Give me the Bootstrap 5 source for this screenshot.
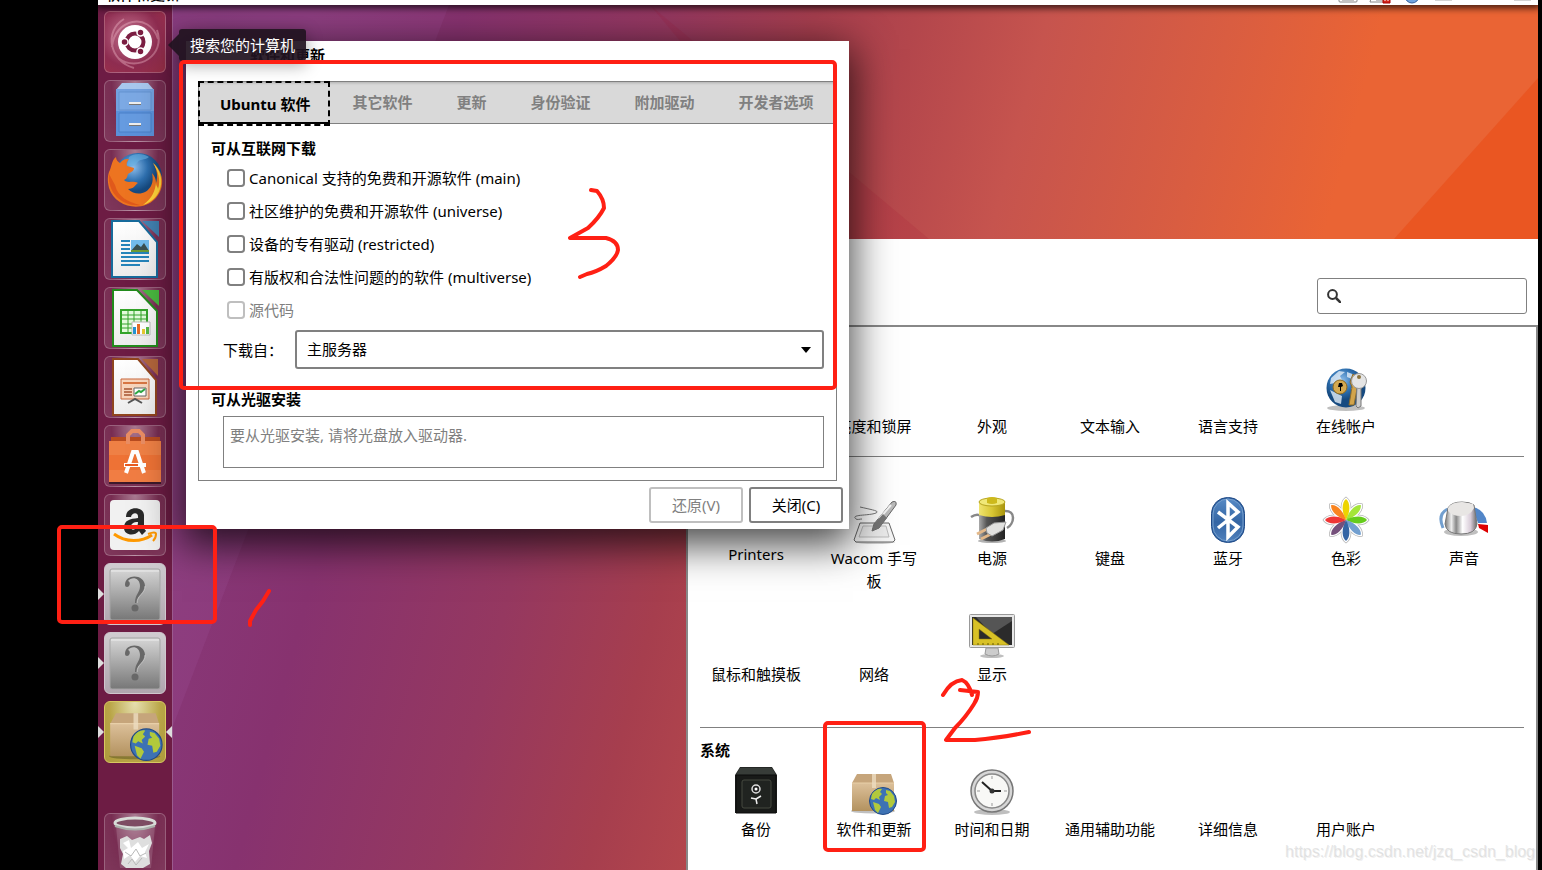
<!DOCTYPE html>
<html lang="zh-CN">
<head>
<meta charset="utf-8">
<meta name="viewport" content="width=device-width, initial-scale=1">
<title>软件和更新</title>
<link href="https://cdn.jsdelivr.net/npm/bootstrap@5.3.0/dist/css/bootstrap.min.css" rel="stylesheet">
<style>
  body { background: #000; color: #000; font: 15px/22px "Noto Sans", "Noto Sans CJK SC", sans-serif; }
  .screen { margin: 0 4px 0 98px; }
  .panel { height: 5px; background: #fff; z-index: 3; box-shadow: 0 1px 7px 2px rgba(0,0,0,.75); font-weight: 500; }
  .panel-title { line-height: 22px; padding-left: 7px; }
  .desktop { background: linear-gradient(105deg, #7d3474 0%, #88397a 12%, #87326f 22%, #953860 34%, #a63e4e 43%, #b3464c 49%, #c6544e 57%, #d95d41 68%, #ea6434 77%, #ea6434 100%); }
  .facets { inset: 0; }
  .launcher { width: 75px; gap: 7px; padding: 6px 6px 0; background: #6d1c44; border-right: 1px solid #9a5b8e; z-index: 1; }
  .launcher-tile { width: 62px; height: 62px; padding: 0; border: 1px solid rgba(255,255,255,.22); border-radius: 6px; background: radial-gradient(ellipse at 50% 0, rgba(255,255,255,.42), rgba(255,255,255,.08) 55%, rgba(255,255,255,.13)); }
  .launcher-tile svg { display: block; margin: -1px; width: 62px; height: 62px; overflow: visible; }
  .tile-home { background: radial-gradient(circle at 40% 40%, #c0708d, #8e2c50 60%, #9d3048); }
  .tile-unknown { background: linear-gradient(#d0ccd0, #b0a5ae); border-color: #d0c6ce; }
  .tile-package { background: radial-gradient(ellipse at 50% 0, #e6dfb0, #b9a547 60%, #ac9a3c); border-color: #d8c860; }
  .tile-trash { margin-top: 43px; }
  .run::before, .run-focus::after { content: ""; position: absolute; top: 24px; border: 6px solid transparent; }
  .run::before { left: -7px; border-left-color: #ddd; border-right: 0; }
  .run-focus::after { right: -7px; border-right-color: #ddd; border-left: 0; }
  .hint { left: 81px; top: 24px; height: 32px; padding: 6px 11px 0; border-radius: 3px; background: rgba(33,19,32,.93); color: #fff; z-index: 4; box-shadow: 0 4px 16px rgba(0,0,0,.35); line-height: 20px; }
  .hint::before { content: ""; position: absolute; left: -11px; top: 5px; border: 11px solid transparent; border-right-color: rgba(33,19,32,.93); border-left: 0; }
  .win { background: #fff; }
  .win-sources { left: 88px; top: 36px; width: 663px; z-index: 2; box-shadow: 0 12px 38px 4px rgba(0,0,0,.72); }
  .win-sources header { height: 40px; padding: 3px 0 0 64px; font-weight: 700; }
  .notebook { margin: 0 12px; border: 1px solid #808080; }
  .tabs { height: 42px; background: #d9d9d9; border-bottom: 1px solid #808080; box-shadow: inset 0 3px 3px -2px rgba(0,0,0,.2); }
  .tabs button { border: 0; background: none; padding: 0 22px; color: #808080; font-weight: 700; white-space: nowrap; line-height: 39px; }
  .tabs .current { color: #000; margin: -1px 0 -3px -1px; border: 2px dashed #000; padding: 0 18px 0 20px; box-shadow: inset 0 -2px #000; line-height: 36px; }
  .page { padding: 13px 12px 12px; }
  .caption { font-size: 15px; line-height: 22px; font-weight: 700; margin: 0; }
  .choices { margin-top: 2px; }
  .choice { height: 33px; gap: 4px; padding-left: 16px; }
  .choice input { margin: 0; width: 18px; height: 18px; border: 2px solid #808080; border-radius: 3px; }
  .choice .form-check-input:disabled ~ label { color: #808080; opacity: 1; }
  .server { margin: 4px 0 19px 12px; }
  .server label { width: 72px; }
  .server select { height: 39px; border: 2px solid #808080; border-radius: 3px; color: #000; font-size: 15px; padding: 0 10px; background: #fff url("data:image/svg+xml,%3Csvg xmlns='http://www.w3.org/2000/svg' width='10' height='6'%3E%3Cpath d='M0 0h10L5 6z'/%3E%3C/svg%3E") no-repeat right 11px center / 10px 6px; }
  .media { margin: 6px 0 0 12px; height: 52px; border: 1px solid #808080; padding: 7px 6px; color: #808080; }
  .actions { gap: 6px; padding: 6px; }
  .actions button { width: 94px; height: 36px; background: #fff; border: 2px solid #808080; border-radius: 3px; color: #000; padding: 0; }
  .actions button:disabled { color: #808080; border-color: #bfbfbf; }
  .win-settings { left: 588px; right: 0; top: 234px; bottom: 0; }
  .win-settings header { height: 86px; padding: 28px 11px 0 0; }
  .search { width: 210px; height: 36px; border: 1px solid #808080; border-radius: 3px; padding: 0 9px; gap: 6px; margin-top: 11px; }
  .search input { border: 0; outline: 0; background: none; min-width: 0; }
  .settings-body { border: 2px solid #888; border-bottom: 0; padding: 0 12px; }
  .grid7 { display: grid; grid-template-columns: repeat(7, 1fr); row-gap: 19px; margin-left: -3px; margin-right: 1px; }
  .grid-personal { padding: 37px 0 18px; }
  .grid-hardware { padding: 39px 0 41px; }
  .grid-system { padding-top: 6px; }
  .skip-one { grid-column: 2; }
  .entry { color: #000; text-decoration: none; text-align: center; padding: 0 12px; line-height: 23px; }
  .entry svg, .blank-icon { display: block; width: 48px; height: 48px; margin: 0 auto 3px; overflow: visible; }
  .entry-latin { line-height: 15px; }
  .rule { border-top: 1px solid #808080; }
  .system-title { padding-top: 11px; }
  .annotations { inset: 0; z-index: 9; pointer-events: none; }
  .watermark { right: 7px; bottom: 7px; z-index: 8; font: 16px/22px "Liberation Sans", sans-serif; color: rgba(205,205,205,.5); text-shadow: 1px 1px 0 rgba(150,150,150,.15); }
</style>
</head>
<body class="vh-100 overflow-hidden position-relative">

<svg width="0" height="0" class="position-absolute" aria-hidden="true">
  <defs>
    <linearGradient id="gBox" x2="0" y2="1"><stop stop-color="#dcc09a"/><stop offset="1" stop-color="#b3925f"/></linearGradient>
    <linearGradient id="gGrey" x2="0" y2="1"><stop stop-color="#d6d6d6"/><stop offset="1" stop-color="#777"/></linearGradient>
    <linearGradient id="gPaper" x2="0" y2="1"><stop stop-color="#fff"/><stop offset="1" stop-color="#ececec"/></linearGradient>
    <linearGradient id="gMetal"><stop stop-color="#777"/><stop offset=".2" stop-color="#eee"/><stop offset=".35" stop-color="#888"/><stop offset=".55" stop-color="#fff"/><stop offset=".8" stop-color="#d8ccd8"/><stop offset="1" stop-color="#666"/></linearGradient>
    <linearGradient id="gBlue" x2="0" y2="1"><stop stop-color="#5f92cc"/><stop offset=".55" stop-color="#3465a4"/><stop offset="1" stop-color="#5585c0"/></linearGradient>
    <linearGradient id="gDark"><stop stop-color="#aaa"/><stop offset=".3" stop-color="#555"/><stop offset="1" stop-color="#222"/></linearGradient>
    <linearGradient id="gYellow"><stop stop-color="#f0e470"/><stop offset=".5" stop-color="#d8c634"/><stop offset="1" stop-color="#a8940c"/></linearGradient>
    <radialGradient id="gGlobe" cx=".4" cy=".3"><stop stop-color="#8dbdea"/><stop offset=".6" stop-color="#2e70b0"/><stop offset="1" stop-color="#164a80"/></radialGradient>
    <symbol id="package" viewBox="0 0 48 48">
      <ellipse cx="22" cy="44" rx="22" ry="2.500" fill="#000" opacity=".25"/>
      <path d="M6 7h34l3 9H1z" fill="#c6a57b"/><path d="M1 16h42v28H1z" fill="url(#gBox)"/>
      <path d="M1 16h42" stroke="#e8cfa8"/><path d="M21 7h4v14h-4z" fill="#ecdcc0" opacity=".8"/>
      <circle cx="32" cy="34" r="13.500" fill="#3d72b4" stroke="#204a87"/>
      <path d="M21 27c3-4 7-6 10-5l-2 3 2 2-3 3 1 3-4-2-2 2-3-1zM22 35l6 2 2 3-3 6-3-3zM35 23l4 1 4 5 1 6-3 5-3 1-1-6-4-1 1-5 3-1-2-2z" fill="#b2c93b"/>
    </symbol>
    <symbol id="unknown" viewBox="0 0 62 62">
      <rect x="6" y="6" width="50" height="51" rx="2" fill="url(#gGrey)" stroke="#a5a5a5"/><path d="M7 8h48" stroke="#eee"/>
      <path d="M21 22c0-12 20-11 20 1 0 8-8 9-8 17h-2c0-9 5-10 5-17 0-8-8-10-12-5 3 1 2 6-1 6q-2 0-2-2z" fill="#686868"/><path d="M41 23c0 8-8 9-8 17" fill="none" stroke="#ddd" stroke-width=".7"/><circle cx="31" cy="45" r="3.500" fill="#686868"/>
    </symbol>
  </defs>
</svg>

<div class="screen h-100 d-flex flex-column position-relative overflow-hidden">
  <div class="panel position-relative flex-shrink-0">
    <div class="d-flex justify-content-between align-items-end h-100 overflow-hidden">
      <span class="panel-title">软件和更新</span>
      <svg width="200" height="5" viewBox="0 0 200 5" aria-hidden="true">
        <path d="M1-8v9q0 1 1 1h16q1 0 1-1v-9M4 0h12" fill="none" stroke="#888"/>
        <path d="M34-5l-2 7h17M38 0h8" fill="none" stroke="#888"/><path d="M45-8h7v11h-7z" fill="#d3281c" stroke="#a00"/><path d="M47 1V-1h3v2" stroke="#fff" fill="none"/>
        <circle cx="74" cy="-4" r="7" fill="#6fa4df" stroke="#345f9c"/>
        <path d="M97 0h17M176 0h17" stroke="#aaa"/>
      </svg>
    </div>
  </div>

  <main class="desktop position-relative flex-grow-1 d-flex">
    <svg class="facets position-absolute w-100 h-100" aria-hidden="true">
      <path d="M0 0h351L20 865H0z" fill="#a560a8" opacity=".16"/>
      <path d="M552 0l279 234v100z" fill="#a01030" opacity=".13"/>
      <path d="M1440 73V865H940L1296 234z" fill="#ea4c18" opacity=".6"/>
    </svg>

    <nav class="launcher d-flex flex-column position-relative flex-shrink-0" aria-label="启动器">
      <button class="launcher-tile tile-home" aria-label="搜索您的计算机"><svg viewBox="0 0 62 62">
        <path d="M8 36C10 8 45 0 54 28M53 19C62 44 34 62 14 47M20 8C0 20 5 50 30 57" fill="none" stroke="#f0b8c8" stroke-width="2" opacity=".4"/>
        <circle cx="31" cy="31" r="17" fill="#fff"/><circle cx="31" cy="31" r="8.500" fill="none" stroke="#7b1e42" stroke-width="4"/>
        <g fill="#7b1e42" stroke="#fff" stroke-width="1.500"><circle cx="20.500" cy="31" r="3.500"/><circle cx="36.500" cy="21.500" r="3.500"/><circle cx="36.500" cy="40.500" r="3.500"/></g></svg></button>
      <button class="launcher-tile" aria-label="文件"><svg viewBox="0 0 62 62">
        <path d="M18 3h26l6 7H12z" fill="#a8c8ee"/><path d="M12 9h38v47H12z" fill="#5b91da"/><path d="M15 12h32v18H15zM15 33h32v19H15z" fill="#669be0" stroke="#4b80c9"/>
        <path d="M12 9h38v22H12z" fill="#fff" opacity=".15"/><path d="M26 22v2h10v-2M26 43v2h10v-2" fill="none" stroke="#777" stroke-width="2"/><path d="M26 22v1h10v-1M26 43v1h10v-1" fill="none" stroke="#eee" stroke-width="2"/></svg></button>
      <button class="launcher-tile" aria-label="Firefox"><svg viewBox="0 0 62 62">
        <circle cx="34" cy="28" r="24" fill="url(#gGlobe)"/><path d="M25 8c5-4 14-4 20 0-5 4-9 1-12 6-2 4-7 3-10 2z" fill="#69b4e4" opacity=".6"/>
        <path d="M5 23C8 18 7 12 12 8c0 3 2 5 4 6 3-4 6-4 9-4-2 2-3 5-2 7l7 2c0 3-3 4-6 6-1 3-1 5-4 6 4 4 8 0 14 3-3 2-4 6-10 6 7 7 18 6 23-3 2-4 2-8 1-13 3 3 4 7 4 10 2-7 1-14-3-20 13 11 11 27 2 36C37 64 11 58 5 39c-1-5-2-10 0-16z" fill="#ed7420"/>
        <path d="M49 14c14 13 10 36-10 42 10-7 12-15 13-22 0 3 2 4 2 6 3-9 0-18-5-26z" fill="#ffd43a"/><path d="M5 25c-2 21 16 33 31 31C24 53 14 48 11 36z" fill="#d84c18" opacity=".65"/></svg></button>
      <button class="launcher-tile" aria-label="LibreOffice Writer"><svg viewBox="0 0 62 62">
        <path d="M8 3h27l18 21v35H8z" fill="url(#gPaper)" stroke="#176b9c" stroke-width="2"/><path d="M38 3h17v16z" fill="#368cbd" opacity=".85"/>
        <g stroke="#2584ba" stroke-width="2"><path d="M17 23h9M17 27h9M17 31h9M17 35h28M17 39h28M17 43h28M17 47h19"/></g><path d="M27 22h18v12H27z" fill="#73bcec"/><path d="M27 33l6-7 4 3 3-4 5 8z" fill="#3b5050"/><path d="M27 32h18v2H27z" fill="#6c9b35"/></svg></button>
      <button class="launcher-tile" aria-label="LibreOffice Calc"><svg viewBox="0 0 62 62">
        <path d="M9 3h24l20 21v35H9z" fill="url(#gPaper)" stroke="#228b1c" stroke-width="2"/><path d="M38 3h17v16z" fill="#49b83f"/>
        <path d="M17 23h26v23H17z" fill="#e4fbdc" stroke="#34a42a" stroke-width="2"/><path d="M17 28h26M17 32h26M17 37h26M17 41h26M24 23v23M30 23v23M37 23v23" stroke="#34a42a"/><path d="M28 35h18v13H28z" fill="#fff" stroke="#bbb"/><path d="M29 40h3v7h-3z" fill="#2693d2"/><path d="M33 37h3v10h-3z" fill="#e56b27"/><path d="M38 42h3v5h-3z" fill="#e6c92f"/><path d="M42 40h3v7h-3z" fill="#54b948"/></svg></button>
      <button class="launcher-tile" aria-label="LibreOffice Impress"><svg viewBox="0 0 62 62">
        <path d="M9 3h25l18 21v35H9z" fill="url(#gPaper)" stroke="#90451e" stroke-width="2"/><path d="M38 3h16v17z" fill="#b2653b"/>
        <path d="M17 23h28v20H17z" fill="#f8d5bc" stroke="#c8663a"/><path d="M19 27h24" stroke="#d87643" stroke-width="2"/><path d="M20 33h8M20 36h8M20 39h8" stroke="#a75431" stroke-width="1.500"/><path d="M30 32h12v8H30z" fill="#fff" stroke="#666"/><path d="M31 38l4-3 2 1 4-3" fill="none" stroke="#2da944" stroke-width="2"/><path d="M24 47l7-4 7 4" fill="none" stroke="#555" stroke-width="2"/></svg></button>
      <button class="launcher-tile" aria-label="Ubuntu 软件中心"><svg viewBox="0 0 62 62">
        <path d="M5 58h52" stroke="#000" opacity=".5" stroke-width="2"/><path d="M7 12h49v10H7z" fill="#b84c20"/><path d="M5 16h52v41H5z" fill="#ee7235"/><path d="M5 16h52v14H5z" fill="#f08a50" opacity=".6"/><path d="M5 45h52v12H5z" fill="#f3854d" opacity=".6"/>
        <path d="M24 19V10l4-4h7l4 4v9" fill="none" stroke="#e98d63" stroke-width="4"/><path d="M22 48l7-21h4l7 21M20 40h22" fill="none" stroke="#fff" stroke-width="4"/><path d="M21 40h13" stroke="#e85b21" stroke-width="2"/></svg></button>
      <button class="launcher-tile" aria-label="Amazon"><svg viewBox="0 0 62 62">
        <rect x="6" y="6" width="50" height="50" rx="4" fill="#f1f1f1"/><path d="M22 23c0-12 19-11 18-1v10c0 4 2 4 2 5l-4 4-3-4c-5 6-15 4-15-3 0-8 6-9 14-10 1-6-6-6-7-1zM34 28c-5 0-7 2-7 5 0 5 7 3 7-5z" fill="#292929" fill-rule="evenodd"/><path d="M10 40c12 9 28 8 38 1" fill="none" stroke="#f90" stroke-width="3"/><path d="M44 40c5-2 8-2 8 0 0 3-1 5-3 7" fill="none" stroke="#f90" stroke-width="2"/></svg></button>
      <button class="launcher-tile tile-unknown run position-relative" aria-label="未知应用程序"><svg viewBox="0 0 62 62"><use href="#unknown" width="62" height="62"/></svg></button>
      <button class="launcher-tile tile-unknown run position-relative" aria-label="未知应用程序"><svg viewBox="0 0 62 62"><use href="#unknown" width="62" height="62"/></svg></button>
      <button class="launcher-tile tile-package run run-focus position-relative" aria-label="软件和更新"><svg viewBox="0 0 62 62"><use href="#package" x="5" y="4" width="56" height="56"/></svg></button>
      <button class="launcher-tile tile-trash flex-shrink-0" aria-label="回收站"><svg viewBox="0 0 62 62">
        <path d="M12 13l4 42h31l4-42z" fill="#fff" opacity=".14"/><ellipse cx="31" cy="10" rx="20" ry="5" fill="#7d4c62" stroke="#d8dcd8" stroke-width="3"/><path d="M11 13q20 7 40 0" fill="none" stroke="#aab0aa" stroke-width="2"/>
        <path d="M16 26l7-3 5 4 8-3 4 2 6-4 2 8-3 8 1 13-7 4H22l-5-4 2-10-3-6z" fill="#dedede"/><path d="M19 30l6-3 2 8 7-6 4 6 7-4-4 8 2 6-7-2-5 6-5-7-6 4-1-8 5-3z" fill="#fff"/><path d="M21 39l6 4 5-7 4 7 6-3M24 51l4-5 4 6 6-7" fill="none" stroke="#b8b8b8"/></svg></button>
    </nav>

    <div class="hint position-absolute" role="tooltip">搜索您的计算机</div>

    <section class="win win-settings position-absolute d-flex flex-column" aria-label="系统设置">
      <header class="d-flex align-items-start justify-content-end">
        <div class="search d-flex align-items-center">
          <svg width="14" height="14" viewBox="0 0 14 14" class="flex-shrink-0" aria-hidden="true"><circle cx="5.500" cy="5.500" r="4.400" fill="none" stroke="#333" stroke-width="2"/><path d="M9 9l5 5" stroke="#333" stroke-width="2.500"/></svg>
          <input type="search" class="w-100" aria-label="搜索">
        </div>
      </header>
      <div class="settings-body flex-grow-1 overflow-hidden">
        <div class="grid7 grid-personal">
          <a class="entry skip-one" href="#"><span class="blank-icon"></span>亮度和锁屏</a>
          <a class="entry" href="#"><span class="blank-icon"></span>外观</a>
          <a class="entry" href="#"><span class="blank-icon"></span>文本输入</a>
          <a class="entry" href="#"><span class="blank-icon"></span>语言支持</a>
          <a class="entry" href="#"><svg viewBox="0 0 48 48"><ellipse cx="24" cy="44" rx="19" ry="3" fill="#000" opacity=".25"/><circle cx="24" cy="24" r="19.500" fill="url(#gGlobe)"/><path d="M9 14l8-7 6 1-5 4 2 4-7 3-5 1zM8 26l12 6-1 8-6-2zM25 8l8 3-3 4-5-2zM29 24l6 2-3 12-3-4z" fill="#e3eef8" opacity=".8"/><circle cx="18" cy="23" r="7" fill="#d4a950" stroke="#8c681c"/><path d="M17 19h3l1 3-2 1v4h-1v-4h-2z"/><path d="M31 10l5 4-2 9 1 2-3 16h-5l3-18-2-5z" fill="#d2a44b" stroke="#8a6a2c"/><path d="M35 22h4v20l-3 2-2-2z" fill="#ccc" stroke="#777"/><circle cx="37" cy="17" r="7.500" fill="#e4e4e4" stroke="#999"/><circle cx="37" cy="13" r="2" fill="#8a723b"/></svg>在线帐户</a>
        </div>
        <div class="rule"></div>
        <div class="grid7 grid-hardware">
          <a class="entry entry-latin" href="#"><span class="blank-icon"></span>Printers</a>
          <a class="entry" href="#"><svg viewBox="0 0 48 48"><ellipse cx="25" cy="46" rx="20" ry="2" opacity=".2"/><path d="M10 27h29l6 17-2 2H6l-2-2z" fill="#f5f5f5" stroke="#666"/><path d="M13 30h23l3 11H9z" fill="#ececec" stroke="#bbb"/><path d="M10 11c13 3 20 4 16 6-7 3-26 1-20 6 1 1 4 0 6 0" fill="none" stroke="#777"/><path d="M42 6q5-2 4 3L29 32l-7 3 2-7z" fill="#bbb" stroke="#666"/><path d="M41 9L29 23" stroke="#f5f5f5" stroke-width="2"/><path d="M33 18l4 4-8 10-7 3 2-7z" fill="#777"/></svg>Wacom 手写板</a>
          <a class="entry" href="#"><svg viewBox="0 0 48 48"><ellipse cx="24" cy="45" rx="14" ry="2" opacity=".3"/><path d="M36 15c13-1 10 13 3 17M3 21q6-4 10-1" fill="none" stroke="#888" stroke-width="2.500"/><path d="M11 17h26v26q-13 5-26 0z" fill="url(#gDark)"/><path d="M11 5q13-5 26 0v14q-13 4-26 0z" fill="url(#gYellow)"/><ellipse cx="24" cy="6" rx="13" ry="4" fill="#f0e878" stroke="#b6a420"/><path d="M19 2q5-2 10 0v5q-5 2-10 0z" fill="#cdb91c"/><path d="M9 38l10-5M13 43l10-5" stroke="#e3b889" stroke-width="3"/><path d="M18 32l8-5 12-1-3 8-11 6-5-3z" fill="#e1e1df" stroke="#999"/></svg>电源</a>
          <a class="entry" href="#"><span class="blank-icon"></span>键盘</a>
          <a class="entry" href="#"><svg viewBox="0 0 48 48"><rect x="7.500" y="1.500" width="33" height="45" rx="16" fill="#3569a8" stroke="#204a87"/><rect x="9" y="3" width="30" height="42" rx="15" fill="url(#gBlue)" stroke="#89aed7" opacity=".8"/><path d="M14 16l20 15-10 10V7l10 9-20 16" fill="none" stroke="#fff" stroke-width="3.500"/></svg>蓝牙</a>
          <a class="entry" href="#"><svg viewBox="0 0 48 48"><defs><path id="petal" d="M24 24C19 15 20 6 24 3c4 3 5 12 0 21z"/></defs>
            <g fill="#fff" stroke="#b5b5b5" stroke-width="4"><use href="#petal"/><use href="#petal" transform="rotate(45 24 24)"/><use href="#petal" transform="rotate(90 24 24)"/><use href="#petal" transform="rotate(135 24 24)"/><use href="#petal" transform="rotate(180 24 24)"/><use href="#petal" transform="rotate(225 24 24)"/><use href="#petal" transform="rotate(270 24 24)"/><use href="#petal" transform="rotate(315 24 24)"/></g>
            <g stroke="#fff" stroke-width="2.500"><use href="#petal"/><use href="#petal" transform="rotate(45 24 24)"/><use href="#petal" transform="rotate(90 24 24)"/><use href="#petal" transform="rotate(135 24 24)"/><use href="#petal" transform="rotate(180 24 24)"/><use href="#petal" transform="rotate(225 24 24)"/><use href="#petal" transform="rotate(270 24 24)"/><use href="#petal" transform="rotate(315 24 24)"/></g>
            <use href="#petal" fill="#edd400"/><use href="#petal" fill="#a4e63a" transform="rotate(45 24 24)"/><use href="#petal" fill="#66cc1c" transform="rotate(90 24 24)"/><use href="#petal" fill="#729fcf" transform="rotate(135 24 24)"/><use href="#petal" fill="#3465a4" transform="rotate(180 24 24)"/><use href="#petal" fill="#75507b" transform="rotate(225 24 24)"/><use href="#petal" fill="#ef3535" transform="rotate(270 24 24)"/><use href="#petal" fill="#f98420" transform="rotate(315 24 24)"/></svg>色彩</a>
          <a class="entry" href="#"><svg viewBox="0 0 48 48"><ellipse cx="21" cy="36" rx="17" ry="4" opacity=".25"/><path d="M3 32Q-3 18 8 13" fill="none" stroke="#729fcf" stroke-width="3"/><path d="M32 11q13 2 15 16h-9z" fill="#5286c8"/><path d="M38 28l10 1v8l-9-5z" fill="#d00"/><path d="M8 12q3-6 14-6 8 0 12 3l3 19q-1 10-16 10T5 28z" fill="url(#gMetal)" stroke="#777"/><path d="M8 12q3-6 14-6l11 2 1 4q-4 8-13 8T8 15z" fill="#e8e6e4"/></svg>声音</a>
          <a class="entry" href="#"><span class="blank-icon"></span>鼠标和触摸板</a>
          <a class="entry" href="#"><span class="blank-icon"></span>网络</a>
          <a class="entry" href="#"><svg viewBox="0 0 48 48"><ellipse cx="24" cy="44" rx="12" ry="2" opacity=".25"/><path d="M18 36h12l1 6q-7 4-14 0z" fill="#ccc" stroke="#999"/><rect x="1.500" y="2.500" width="45" height="33" rx="1" fill="#e8e8e8" stroke="#999"/><path d="M4 5h40v28H4z" fill="#2b2b2b"/><path d="M8 5h36v4L24 22z" fill="#555"/><path d="M5 6l36 27H5zM11 17v10h13z" fill="#d8c126" stroke="#8e7a0b" stroke-width=".5" fill-rule="evenodd"/><path d="M10 33v-2M15 33v-2M20 33v-2M25 33v-2M30 33v-2" stroke="#6b5c00"/></svg>显示</a>
        </div>
        <div class="rule"></div>
        <h2 class="caption system-title">系统</h2>
        <div class="grid7 grid-system">
          <a class="entry" href="#"><svg viewBox="0 0 48 48"><path d="M8 0h32l5 8v38H3V8z" fill="#252725"/><path d="M8 1h32l4 7H4z" fill="#373c38"/><path d="M4 8h40v38H4z" fill="#181a18" stroke="#0a0a0a"/><rect x="10" y="13" width="29" height="28" rx="2" fill="#202320" stroke="#45483f"/><circle cx="24" cy="22" r="4" fill="#222" stroke="#ddd" stroke-width="1.500"/><circle cx="24" cy="22" r="1.500" fill="#fff"/><path d="M24 32l5-3M24 32l-5-1M24 32l1 5" stroke="#eee" stroke-width="1.500"/></svg>备份</a>
          <a class="entry" href="#"><svg viewBox="0 0 48 48"><use href="#package" x="1" y="0" width="48" height="48"/></svg>软件和更新</a>
          <a class="entry" href="#"><svg viewBox="0 0 48 48"><ellipse cx="24" cy="45" rx="18" ry="3" opacity=".25"/><circle cx="24" cy="24" r="21" fill="#d6d6d6" stroke="#777" stroke-width="1.500"/><circle cx="24" cy="24" r="17" fill="#f8f8f6" stroke="#888" stroke-width="1.500"/><path d="M24 9v3M24 36v3M9 24h3M36 24h3" stroke="#999"/><path d="M14 15l10 9h9" fill="none" stroke="#222" stroke-width="2"/><circle cx="24" cy="24" r="2.500" fill="#333"/></svg>时间和日期</a>
          <a class="entry" href="#"><span class="blank-icon"></span>通用辅助功能</a>
          <a class="entry" href="#"><span class="blank-icon"></span>详细信息</a>
          <a class="entry" href="#"><span class="blank-icon"></span>用户账户</a>
        </div>
      </div>
    </section>

    <section class="win win-sources position-absolute" aria-label="软件和更新">
      <header>软件和更新</header>
      <div class="notebook">
        <div class="tabs d-flex" role="tablist">
          <button role="tab" class="current" aria-selected="true">Ubuntu 软件</button>
          <button role="tab">其它软件</button>
          <button role="tab">更新</button>
          <button role="tab">身份验证</button>
          <button role="tab">附加驱动</button>
          <button role="tab">开发者选项</button>
        </div>
        <div class="page">
          <h2 class="caption">可从互联网下载</h2>
          <div class="choices">
            <div class="choice d-flex align-items-center"><input class="form-check-input" type="checkbox" id="c1"><label for="c1">Canonical 支持的免费和开源软件 (main)</label></div>
            <div class="choice d-flex align-items-center"><input class="form-check-input" type="checkbox" id="c2"><label for="c2">社区维护的免费和开源软件 (universe)</label></div>
            <div class="choice d-flex align-items-center"><input class="form-check-input" type="checkbox" id="c3"><label for="c3">设备的专有驱动 (restricted)</label></div>
            <div class="choice d-flex align-items-center"><input class="form-check-input" type="checkbox" id="c4"><label for="c4">有版权和合法性问题的的软件 (multiverse)</label></div>
            <div class="choice d-flex align-items-center"><input class="form-check-input" type="checkbox" id="c5" disabled><label for="c5">源代码</label></div>
          </div>
          <div class="server d-flex align-items-center">
            <label for="server" class="flex-shrink-0">下载自：</label>
            <select id="server" class="form-select"><option>主服务器</option></select>
          </div>
          <h2 class="caption">可从光驱安装</h2>
          <div class="media">要从光驱安装, 请将光盘放入驱动器.</div>
        </div>
      </div>
      <div class="actions d-flex justify-content-end">
        <button disabled>还原(V)</button>
        <button>关闭(C)</button>
      </div>
    </section>
  </main>
</div>

<div class="watermark position-absolute">https://blog.csdn.net/jzq_csdn_blog</div>

<svg class="annotations position-absolute w-100 h-100" fill="none" stroke="#ff2014" stroke-width="4" stroke-linejoin="round" stroke-linecap="round" aria-hidden="true">
  <rect x="59" y="527" width="156" height="95" rx="3"/>
  <rect x="181" y="62" width="654" height="326" rx="3"/>
  <rect x="825" y="723" width="99" height="127" rx="3"/>
  <path d="M269 591l-6 10-7 9-6 11v4"/>
  <path d="M591 190l6 1q7 8 7 17-5 10-16 20l-18 10h36q12 3 12 12-1 7-12 16-10 6-19 8l-7 3"/>
  <path d="M943 695q8-14 19-15 7 3 10 15M960 690l18 2q0 6-4 12-8 13-19 24l-9 12h29q25-2 54-8"/>
</svg>

<script src="https://cdn.jsdelivr.net/npm/bootstrap@5.3.0/dist/js/bootstrap.bundle.min.js"></script>
</body>
</html>
